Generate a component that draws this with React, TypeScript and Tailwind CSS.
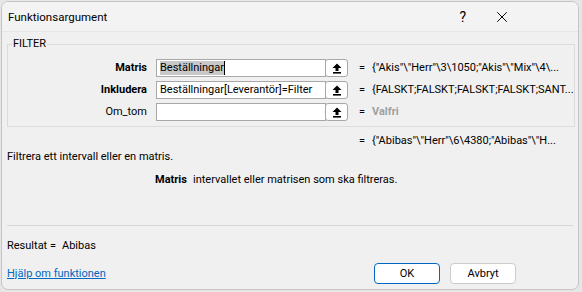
import { X } from 'lucide-react'

const font = { fontFamily: 'Roboto, "Liberation Sans", Arial, sans-serif' }

function PickButton() {
  return (
    <span className="-ml-px flex h-[18px] w-[23px] shrink-0 items-center justify-center rounded-[3px] border border-[#a8a8a8] bg-white">
      <svg width="10" height="11" viewBox="0 0 10 11">
        <path d="M5 0.5 L9.5 5 H6.5 V8 H3.5 V5 H0.5 Z" fill="#000" />
        <rect x="1" y="9" width="8" height="1.6" fill="#000" />
      </svg>
    </span>
  )
}

function ArgRow({ label, bold, value, result, muted, selected }: {
  label: string
  bold?: boolean
  value?: string
  result: string
  muted?: boolean
  selected?: boolean
}) {
  return (
    <div className="flex h-[18px] items-center">
      <div className={`w-[139px] text-right ${bold ? 'font-bold' : ''}`}>{label}</div>
      <div className="ml-[9px] flex h-[18px] w-[170px] items-center overflow-hidden border border-[#a8a8a8] bg-white pl-[3px] whitespace-nowrap">
        {selected ? (
          <>
            <span className="bg-[#c8c8c8] leading-[14px]">{value}</span>
            <span className="h-[14px] w-px bg-black" />
          </>
        ) : (
          <span>{value}</span>
        )}
      </div>
      <PickButton />
      <span className="ml-[11px] w-[13px]">=</span>
      <span className={`whitespace-nowrap ${muted ? 'font-bold text-[#a0a0a0]' : ''}`}>{result}</span>
    </div>
  )
}

export default function App() {
  return (
    <div className="h-[292px] w-[582px] bg-[#e6e6e6] pl-px pt-px text-[11px] leading-[16px] text-black" style={font}>
      <div className="flex h-[289px] w-[578px] flex-col overflow-hidden rounded-[7px] border border-[#c4c4c4] bg-[#f0f0f0]">
        <div className="flex h-[30px] shrink-0 items-center border-b border-[#e6e6e6] bg-[#f3f3f3] pl-[6px] text-[11.5px]">
          <span className="flex-1">Funktionsargument</span>
          <span className="mr-[27px] text-[14px]">?</span>
          <X size={18} strokeWidth={1.3} className="mr-[67px]" />
        </div>

        <div className="flex flex-1 flex-col px-[5px]">
          <fieldset className="mt-[4px] border border-[#dcdcdc] px-0 pt-[7px] pb-[5px]">
            <legend className="ml-[4px] px-px">FILTER</legend>
            <div className="flex flex-col gap-[4px]">
              <ArgRow label="Matris" bold value="Beställningar" selected result={'{"Akis"\\"Herr"\\3\\1050;"Akis"\\"Mix"\\4\\...'} />
              <ArgRow label="Inkludera" bold value="Beställningar[Leverantör]=Filter" result="{FALSKT;FALSKT;FALSKT;FALSKT;SANT..." />
              <ArgRow label="Om_tom" value="" result="Valfri" muted />
            </div>
          </fieldset>

          <div className="mt-[6px] flex pl-[352px] whitespace-nowrap">
            <span className="w-[13px]">=</span>
            <span>{'{"Abibas"\\"Herr"\\6\\4380;"Abibas"\\"H...'}</span>
          </div>
          <div>Filtrera ett intervall eller en matris.</div>
          <div className="mt-[7px] flex pl-[148px]">
            <span className="w-[38px] font-bold">Matris</span>
            <span>intervallet eller matrisen som ska filtreras.</span>
          </div>

          <div className="mt-auto border-t border-[#d9d9d9] pt-[12px]">
            <div className="flex">
              <span className="w-[55px]">Resultat =</span>
              <span>Abibas</span>
            </div>
            <div className="mt-[9px] mb-[5px] flex items-center">
              <a href="#" className="flex-1 text-[#0067c0] underline">Hjälp om funktionen</a>
              <button className="h-[21px] w-[66px] rounded-[4px] border border-[#0067c0] bg-white">OK</button>
              <button className="mr-[57px] ml-[10px] h-[21px] w-[66px] rounded-[4px] border border-[#cccccc] bg-white">Avbryt</button>
            </div>
          </div>
        </div>
      </div>
    </div>
  )
}
